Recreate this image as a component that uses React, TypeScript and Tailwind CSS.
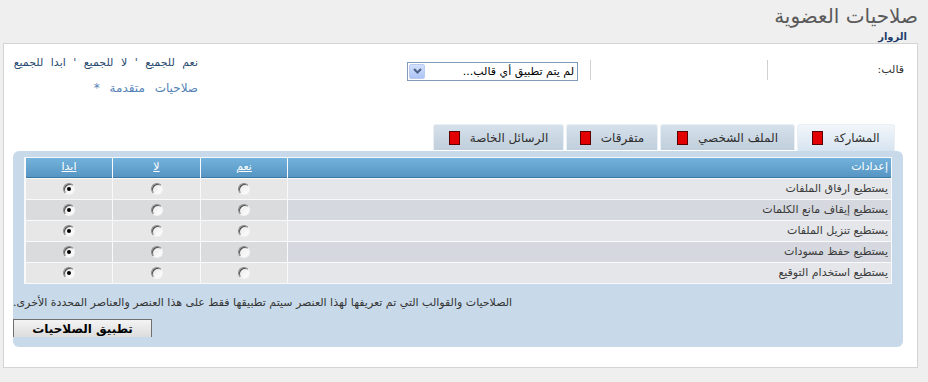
import React from "react";

const rows = [
  "يستطيع ارفاق الملفات",
  "يستطيع إيقاف مانع الكلمات",
  "يستطيع تنزيل الملفات",
  "يستطيع حفظ مسودات",
  "يستطيع استخدام التوقيع",
];

function Radio({ checked }: { checked?: boolean }) {
  return (
    <span className="relative inline-block w-[12px] h-[12px] rounded-full border border-t-[#8a8a8a] border-l-[#8a8a8a] border-r-[#f4f4f4] border-b-[#f4f4f4] bg-gradient-to-br from-[#e8e8e8] to-white shadow-[inset_1px_1px_0_#505050]">
      {checked && (
        <span className="absolute left-[3px] top-[3px] w-[4px] h-[4px] rounded-full bg-black" />
      )}
    </span>
  );
}

function Tab({ label, active, w }: { label: string; active?: boolean; w: string }) {
  return (
    <div
      className={
        "flex items-center justify-center gap-[10px] border border-b-0 border-[#e9eff5] rounded-t-[3px] text-[12px] text-[#2f2f2f] " +
        w +
        (active
          ? " h-[27px] bg-gradient-to-b from-[#f2f6fa] to-[#d6e4f0]"
          : " h-[26px] mb-px bg-gradient-to-b from-[#d5e0ea] to-[#c0cfdc]")
      }
    >
      <span className="leading-none">{label}</span>
      <span className="w-[11px] h-[14px] bg-[#e30000] border border-[#5a0000]" />
    </div>
  );
}

export default function App() {
  return (
    <div
      dir="rtl"
      className="w-[928px] h-[382px] bg-[#efefef] overflow-hidden font-['DejaVu_Sans',sans-serif]"
    >
      <div className="h-[31px] pr-[10px] pt-[3px] text-[20px] leading-[26px] text-[#5a5a5a]">
        صلاحيات العضوية
      </div>
      <div className="h-[12px] pr-[21px] text-[10px] leading-[12px] font-bold text-[#1f3d6b]">
        الزوار
      </div>
      <div className="mr-[10px] w-[915px] h-[325px] border border-[#d4d4d4] bg-white">
        {/* top section */}
        <div className="flex h-[79px]">
          <div className="mt-[16px] flex h-[20px] items-center">
            <div className="w-[150px] h-[20px] pr-[13px] border-l border-[#d0d0d0] flex items-center text-[11px] text-[#333]">
              قالب:
            </div>
            <div className="w-[177px] h-[20px] border-l border-[#d0d0d0]" />
            <div className="pr-[12px] pt-[2px]">
              <div className="w-[171px] h-[19px] border border-[#7f9db9] bg-white flex items-center">
                <span className="flex-1 pr-[3px] text-[11px] text-black leading-none">
                  لم يتم تطبيق أي قالب...
                </span>
                <span className="ml-px w-[16px] h-[15px] rounded-[2px] bg-gradient-to-b from-[#d2e0fd] to-[#adc4f5] border border-[#b9cbf3] flex items-center justify-center">
                  <svg width="9" height="6" viewBox="0 0 9 6">
                    <path d="M1 1 L4.5 4.5 L8 1" stroke="#4d6185" strokeWidth="2" fill="none" />
                  </svg>
                </span>
              </div>
            </div>
          </div>
          <div className="mr-auto mt-[12px] w-[194px] whitespace-nowrap">
            <div className="h-[14px] leading-[14px] text-[11px] [word-spacing:4px] text-[#2b4a70]">
              نعم للجميع ' لا للجميع ' ابدا للجميع
            </div>
            <div className="mt-[11px] h-[14px] leading-[14px] text-[12px] [word-spacing:6px] text-[#5582b6]">
              صلاحيات متقدمة *
            </div>
          </div>
        </div>
        {/* tabs */}
        <div className="flex items-end gap-[2px] pr-[22px] h-[28px]">
          <Tab label="المشاركة" active w="w-[98px]" />
          <Tab label="الملف الشخصي" w="w-[135px]" />
          <Tab label="متفرقات" w="w-[92px]" />
          <Tab label="الرسائل الخاصة" w="w-[131px]" />
        </div>
        {/* blue panel */}
        <div className="ml-[9px] mr-[14px] h-[196px] rounded-[6px] bg-[#c8daea] pt-[6px]">
          <div className="mx-[11px] grid grid-cols-[603px_86px_87px_86px] gap-px p-px bg-[#f7f9fb] text-[11px]">
            <div className="h-[20px] bg-gradient-to-b from-[#72b2dc] to-[#5796c3] border-b border-[#3a77a5] pr-[3px] flex items-center text-white">
              إعدادات
            </div>
            {["نعم", "لا", "ابدا"].map((h) => (
              <div
                key={h}
                className="h-[20px] bg-gradient-to-b from-[#72b2dc] to-[#5796c3] border-b border-[#3a77a5] flex items-center justify-center text-white underline"
              >
                {h}
              </div>
            ))}
            {rows.map((r, i) => {
              const bg = i % 2 === 0 ? "bg-[#e4e6e9]" : "bg-[#d5d8de]";
              const bg2 = i % 2 === 0 ? "bg-[#e7e7e7]" : "bg-[#dadbdd]";
              return (
                <React.Fragment key={r}>
                  <div className={"h-[20px] pr-[3px] flex items-center text-[#3a3a3a] " + bg}>{r}</div>
                  <div className={"h-[20px] flex items-center justify-center " + bg2}>
                    <Radio />
                  </div>
                  <div className={"h-[20px] flex items-center justify-center " + bg2}>
                    <Radio />
                  </div>
                  <div className={"h-[20px] flex items-center justify-center " + bg2}>
                    <Radio checked />
                  </div>
                </React.Fragment>
              );
            })}
          </div>
          <div className="mt-[12px] h-[14px] leading-[14px] text-left text-[11px] text-[#333] whitespace-nowrap">
            الصلاحيات والقوالب التي تم تعريفها لهذا العنصر سيتم تطبيقها فقط على هذا العنصر والعناصر المحددة الأخرى.
          </div>
          <div className="mt-[9px] flex justify-end">
            <div className="w-[139px] h-[18px] border border-b-0 border-[#707070] bg-gradient-to-b from-[#f4f4f4] to-[#dcdcdc] flex items-center justify-center text-[12px] font-bold text-black">
              تطبيق الصلاحيات
            </div>
          </div>
        </div>
      </div>
    </div>
  );
}
